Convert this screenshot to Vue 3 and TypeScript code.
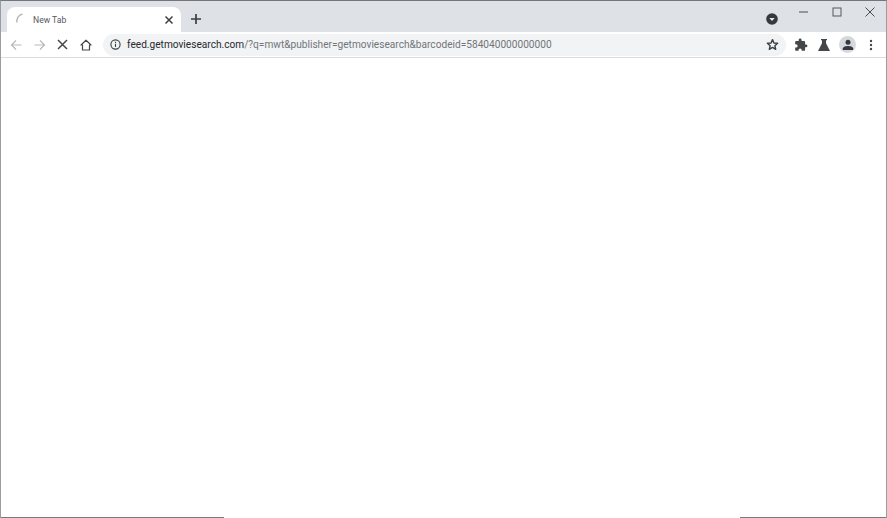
<script setup lang="ts">
const url = {
  host: 'feed.getmoviesearch.com',
  rest: '/?q=mwt&publisher=getmoviesearch&barcodeid=584040000000000',
};
</script>

<template>
  <div class="window">
    <div class="tabstrip">
      <div class="tab">
        <svg class="spinner" width="16" height="16" viewBox="0 0 16 16">
          <path d="M3 10.500A7 7 0 0 1 8.500 2" fill="none" stroke="#b4b8bd" stroke-width="1.400" />
        </svg>
        <span class="tab-title">New Tab</span>
        <svg class="tab-close" width="10" height="10" viewBox="0 0 10 10">
          <path d="M1.500 1.500l7 7M8.500 1.500l-7 7" stroke="#3c4043" stroke-width="1.500" />
        </svg>
      </div>
      <svg class="new-tab" width="12" height="12" viewBox="0 0 12 12">
        <path d="M6 1v10M1 6h10" stroke="#3c4043" stroke-width="1.700" />
      </svg>
      <div class="spacer"></div>
      <svg class="tab-search" width="12" height="12" viewBox="0 0 12 12">
        <circle cx="6" cy="6" r="5.800" fill="#35393d" />
        <path d="M3.300 5h5.400L6 8z" fill="#e8eaed" />
      </svg>
      <div class="win-controls">
        <svg width="10" height="10" viewBox="0 0 10 10"><path d="M0 5h9" stroke="#4a4d50" stroke-width="1" /></svg>
        <svg width="10" height="10" viewBox="0 0 10 10"><rect x="1" y="1" width="8" height="8" fill="none" stroke="#55585b" stroke-width="1" /></svg>
        <svg width="10" height="10" viewBox="0 0 10 10"><path d="M.5 .5l9 9M9.500 .5l-9 9" stroke="#4a4d50" stroke-width="1" /></svg>
      </div>
    </div>

    <div class="toolbar">
      <svg class="nav first" width="12" height="12" viewBox="0 0 12 12">
        <path d="M11.500 6H1.500M6 1.500L1.500 6 6 10.500" fill="none" stroke="#b6b9bc" stroke-width="1.200" />
      </svg>
      <svg class="nav forward" width="12" height="12" viewBox="0 0 12 12">
        <path d="M.5 6h10M6 1.500L10.500 6 6 10.500" fill="none" stroke="#b6b9bc" stroke-width="1.200" />
      </svg>
      <svg class="nav stop" width="11" height="11" viewBox="0 0 11 11">
        <path d="M1 1l9 9M10 1l-9 9" stroke="#45484b" stroke-width="1.500" />
      </svg>
      <svg class="nav home" width="12" height="12" viewBox="0 0 12 12">
        <path d="M6 1.200L1 6h1.500v5h7V6H11z" fill="none" stroke="#45484b" stroke-width="1.200" stroke-linejoin="round" />
      </svg>

      <div class="omnibox">
        <svg class="info" width="11" height="11" viewBox="0 0 11 11">
          <circle cx="5.500" cy="5.500" r="4.600" fill="none" stroke="#3c4043" stroke-width="1.100" />
          <path d="M5.500 4.800v3.200M5.500 2.800v1.100" stroke="#3c4043" stroke-width="1.100" />
        </svg>
        <div class="url"><span class="host">{{ url.host }}</span><span class="rest">{{ url.rest }}</span></div>
        <svg class="star" width="13" height="13" viewBox="0 0 24 24">
          <path d="M12 3l2.700 6.200 6.800.6-5.100 4.500 1.500 6.600L12 17.400l-5.900 3.500 1.500-6.600L2.500 9.800l6.800-.6z" fill="none" stroke="#3c4043" stroke-width="2.600" stroke-linejoin="round" />
        </svg>
      </div>

      <svg class="puzzle" width="14" height="14" viewBox="0 0 24 24">
        <path d="M20.500 11H19V7a2 2 0 0 0-2-2h-4V3.500a2.500 2.500 0 0 0-5 0V5H4a2 2 0 0 0-2 2v3.800h1.500a2.700 2.700 0 0 1 0 5.400H2V20a2 2 0 0 0 2 2h3.800v-1.500a2.700 2.700 0 0 1 5.400 0V22H17a2 2 0 0 0 2-2v-4h1.500a2.500 2.500 0 0 0 0-5z" fill="#44474a" />
      </svg>
      <svg class="flask" width="14" height="14" viewBox="0 0 14 14">
        <path d="M4 1h6v1.200H9v3L13 13H1l4-7.800v-3H4z" fill="#44474a" />
      </svg>
      <div class="avatar">
        <svg width="12" height="12" viewBox="0 0 12 12">
          <circle cx="6" cy="3.300" r="2.500" fill="#35383c" />
          <path d="M.8 11V9.500C.8 7.800 4 7 6 7s5.200.8 5.200 2.500V11z" fill="#35383c" />
        </svg>
      </div>
      <svg class="menu" width="4" height="12" viewBox="0 0 4 12">
        <circle cx="2" cy="2" r="1.200" fill="#45484b" />
        <circle cx="2" cy="6" r="1.200" fill="#45484b" />
        <circle cx="2" cy="10" r="1.200" fill="#45484b" />
      </svg>
    </div>

    <main class="page"></main>

    <div class="bottom-edge">
      <div class="edge left"></div>
      <div class="edge right"></div>
    </div>
  </div>
</template>

<style>
html,
body {
  margin: 0;
  background: #fff;
}
</style>

<style scoped>
.window {
  box-sizing: border-box;
  width: 887px;
  height: 518px;
  display: flex;
  flex-direction: column;
  border-top: 1px solid #74777a;
  border-left: 1px solid #9a9c9e;
  border-right: 1px solid #9a9c9e;
  font-family: Roboto, "Liberation Sans", sans-serif;
  overflow: hidden;
}

.tabstrip {
  height: 31px;
  flex: none;
  display: flex;
  align-items: flex-end;
  background: #dee1e6;
  padding-left: 6px;
}

.tab {
  box-sizing: border-box;
  width: 174px;
  height: 25px;
  display: flex;
  align-items: center;
  padding: 0 7px 0 7px;
  background: #fff;
  border-radius: 8px 8px 0 0;
}

.spinner {
  flex: none;
}

.tab-title {
  flex: 1;
  margin-left: 3px;
  font-size: 8.600px;
  color: #55585c;
}

.new-tab {
  margin: 0 0 7px 9px;
}

.spacer {
  flex: 1;
}

.tab-search {
  margin-bottom: 7px;
}

.win-controls {
  align-self: flex-start;
  display: flex;
  gap: 23px;
  margin: 6px 11px 0 21px;
}

.toolbar {
  height: 25px;
  flex: none;
  display: flex;
  align-items: center;
  background: #fff;
  border-bottom: 1px solid #dadce0;
}

.nav {
  flex: none;
}

.first {
  margin-left: 9px;
}

.forward {
  margin-left: 12px;
}

.stop {
  margin-left: 11px;
}

.home {
  margin-left: 12px;
}

.omnibox {
  box-sizing: border-box;
  width: 683px;
  height: 22px;
  margin-left: 11px;
  flex: none;
  display: flex;
  align-items: center;
  padding: 0 7px 0 7px;
  background: #f1f3f4;
  border-radius: 11px;
}

.info {
  flex: none;
}

.url {
  flex: 1;
  margin-left: 6px;
  font-size: 10.150px;
  white-space: nowrap;
}

.host {
  color: #26292c;
}

.rest {
  color: #71757a;
}

.star {
  flex: none;
}

.puzzle {
  flex: none;
  margin-left: 8px;
}

.flask {
  flex: none;
  margin-left: 9px;
}

.avatar {
  flex: none;
  width: 17px;
  height: 17px;
  margin-left: 8px;
  display: flex;
  align-items: center;
  justify-content: center;
  border-radius: 50%;
  background: #d5d8dd;
}

.menu {
  flex: none;
  margin-left: 13px;
}

.page {
  flex: 1;
  background: #fff;
}

.bottom-edge {
  flex: none;
  display: flex;
  justify-content: space-between;
  height: 1px;
}

.edge {
  background: #77797b;
}

.edge.left {
  width: 223px;
}

.edge.right {
  width: 146px;
}
</style>
